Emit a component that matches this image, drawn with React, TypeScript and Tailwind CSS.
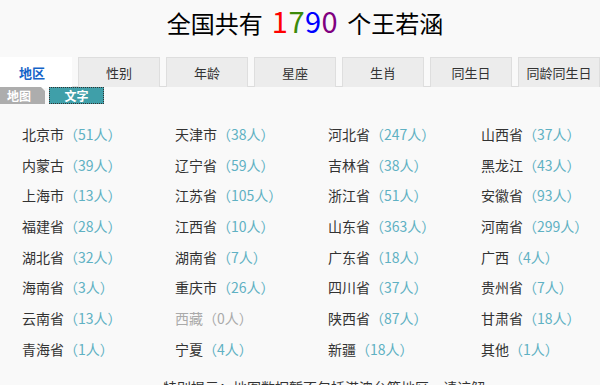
const FONT = "font-['Noto_Sans_CJK_SC','Noto_Sans',sans-serif]";

const TABS = ["性别", "年龄", "星座", "生肖", "同生日", "同龄同生日"];

const AREAS: [string, number][] = [
  ["北京市", 51], ["天津市", 38], ["河北省", 247], ["山西省", 37],
  ["内蒙古", 39], ["辽宁省", 59], ["吉林省", 38], ["黑龙江", 43],
  ["上海市", 13], ["江苏省", 105], ["浙江省", 51], ["安徽省", 93],
  ["福建省", 28], ["江西省", 10], ["山东省", 363], ["河南省", 299],
  ["湖北省", 32], ["湖南省", 7], ["广东省", 18], ["广西", 4],
  ["海南省", 3], ["重庆市", 26], ["四川省", 37], ["贵州省", 7],
  ["云南省", 13], ["西藏", 0], ["陕西省", 87], ["甘肃省", 18],
  ["青海省", 1], ["宁夏", 4], ["新疆", 18], ["其他", 1],
];

export default function App() {
  return (
    <div className={`h-[385px] w-[600px] overflow-hidden bg-[#f9f9f9] text-[#333] ${FONT}`}>
      {/* Title */}
      <div className="flex h-[57px] items-start justify-center pt-[1px] pl-[10px]">
        <h1 className="flex items-baseline text-[24px] leading-[38px] font-normal text-black">
          <span>全国共有</span>
          <span className="mx-[9px] text-[29px] tracking-[0.5px]">
            <span className="text-[#ff0000]">1</span>
            <span className="text-[#3c8a0a]">7</span>
            <span className="text-[#0000ff]">9</span>
            <span className="text-[#800080]">0</span>
          </span>
          <span>个王若涵</span>
        </h1>
      </div>

      {/* Tabs */}
      <div className="flex h-[30px] gap-[6px] border-b border-[#dcdcdc]">
        <div className="-ml-[8px] flex h-[31px] w-[82px] items-center justify-center bg-white text-[13px] font-bold text-[#1463c8]">
          地区
        </div>
        {TABS.map((t) => (
          <div
            key={t}
            className="flex h-[30px] w-[82px] shrink-0 items-center justify-center border border-b-0 border-[#dedede] bg-[#ececec] text-[13px] text-[#333]"
          >
            {t}
          </div>
        ))}
      </div>

      {/* Sub tabs */}
      <div className="flex h-[17px] gap-[4px] text-[12px] font-bold leading-[17px] text-white">
        <div className="w-[45px] bg-[#adadad] pl-[7px] [clip-path:polygon(0_0,41px_0,45px_4px,45px_100%,0_100%)]">
          地图
        </div>
        <div className="w-[55px] border border-dotted border-[#333] bg-[#3f9fa9] text-center leading-[15px]">
          文字
        </div>
      </div>

      {/* Area list */}
      <div className="mt-[15px] grid grid-cols-[153px_153px_153px_153px] pl-[22px] text-[14px]">
        {AREAS.map(([name, n]) => (
          <div
            key={name}
            className={`flex h-[30.7px] items-center whitespace-nowrap ${n === 0 ? "text-[#aaa]" : ""}`}
          >
            <span>{name}</span>
            <span className={n === 0 ? "text-[#aaa]" : "text-[#5fb1c3]"}>（{n}人）</span>
          </div>
        ))}
      </div>

      <p className="mt-[12px] pl-[163px] text-[14px] whitespace-nowrap text-[#333]">
        特别提示：地图数据暂不包括港澳台等地区，请谅解。
      </p>
    </div>
  );
}
